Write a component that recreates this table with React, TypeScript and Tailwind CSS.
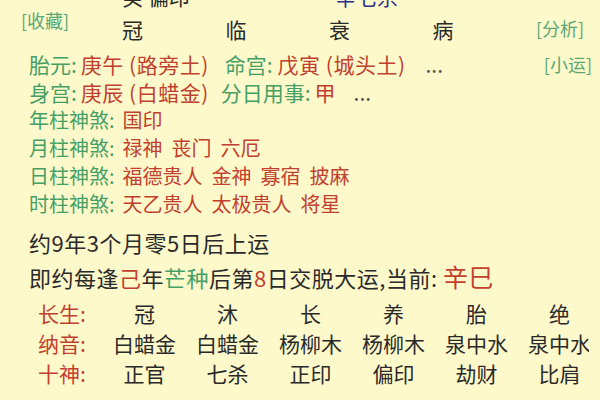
const GREEN = 'text-[#45a066]';
const RED = 'text-[#c2402f]';
const LINK = 'text-[#5aa777]';

const PILLAR_COLS = ['冠', '临', '衰', '病'];

const SHENSHA = [
  { label: '年柱神煞', items: ['国印'] },
  { label: '月柱神煞', items: ['禄神', '丧门', '六厄'] },
  { label: '日柱神煞', items: ['福德贵人', '金神', '寡宿', '披麻'] },
  { label: '时柱神煞', items: ['天乙贵人', '太极贵人', '将星'] },
];

const TABLE = [
  { label: '长生', cells: ['冠', '沐', '长', '养', '胎', '绝'] },
  { label: '纳音', cells: ['白蜡金', '白蜡金', '杨柳木', '杨柳木', '泉中水', '泉中水'] },
  { label: '十神', cells: ['正官', '七杀', '正印', '偏印', '劫财', '比肩'] },
];

export default function App() {
  return (
    <div
      className="w-[600px] h-[400px] overflow-hidden bg-[#fdf9ca] text-[#2a2a2a]"
      style={{ fontFamily: '"Noto Sans CJK SC", "Noto Sans", sans-serif' }}
    >
      {/* hidden stems row, scrolled mostly off the top */}
      <div className="flex h-[28px] mt-[-18px] text-[21px] leading-[28px]">
        <div className="w-[122px]" />
        <div className="w-[213px]">癸 偏印</div>
        <div className="text-[#2e2f8f]">辛七杀</div>
      </div>

      {/* 长生 of pillars */}
      <div className="flex h-[40px]">
        <div className={`w-[122px] pl-[21px] text-[18px] leading-[20px] ${LINK}`}>[收藏]</div>
        <div className="grid grid-cols-4 w-[414px] text-[21px] leading-[40px] mt-[-1px]">
          {PILLAR_COLS.map((c, i) => (
            <span key={i}>{c}</span>
          ))}
        </div>
        <div className={`text-[18px] leading-[20px] pt-[8px] ${LINK}`}>[分析]</div>
      </div>

      <div className="pl-[29px] text-[21px] leading-[28px]">
        <div className="flex">
          <span className={GREEN}>胎元:</span>
          <span className={`${RED} ml-[4px] tracking-[0.5px]`}>庚午 (路旁土)</span>
          <span className={`${GREEN} ml-[16px]`}>命宫:</span>
          <span className={`${RED} ml-[5px] tracking-[0.5px]`}>戊寅 (城头土)</span>
          <span className="ml-[20px] text-[#555]">...</span>
          <span className={`ml-auto mr-[8px] text-[18px] ${LINK}`}>[小运]</span>
        </div>
        <div className="flex">
          <span className={GREEN}>身宫:</span>
          <span className={`${RED} ml-[4px] tracking-[0.5px]`}>庚辰 (白蜡金)</span>
          <span className={`${GREEN} ml-[12px]`}>分日用事:</span>
          <span className={`${RED} ml-[4px]`}>甲</span>
          <span className="ml-[18px] text-[#555]">...</span>
        </div>
        {SHENSHA.map((row) => (
          <div key={row.label} className="flex text-[20px]">
            <span className={GREEN}>{row.label}:</span>
            <span className={`${RED} ml-[8px] flex gap-[9px]`}>
              {row.items.map((it) => (
                <span key={it}>{it}</span>
              ))}
            </span>
          </div>
        ))}
      </div>

      <div className="pl-[29px] text-[22px] leading-[34px] mt-[7px] tracking-[0.5px]">
        <div>约9年3个月零5日后上运</div>
        <div>
          即约每逢<span className={RED}>己</span>年<span className={GREEN}>芒种</span>后第
          <span className={RED}>8</span>日交脱大运,当前: <span className={`${RED} text-[25px]`}>辛巳</span>
        </div>
      </div>

      <div className="mt-[4px] w-[589px] overflow-hidden text-[21px] leading-[30px]">
        {TABLE.map((row) => (
          <div key={row.label} className="grid grid-cols-[103px_repeat(6,83px)] h-[30px]">
            <span className={`${RED} pl-[38px]`}>{row.label}:</span>
            {row.cells.map((c, ci) => (
              <span key={ci} className="text-center whitespace-nowrap">{c}</span>
            ))}
          </div>
        ))}
      </div>
    </div>
  );
}
